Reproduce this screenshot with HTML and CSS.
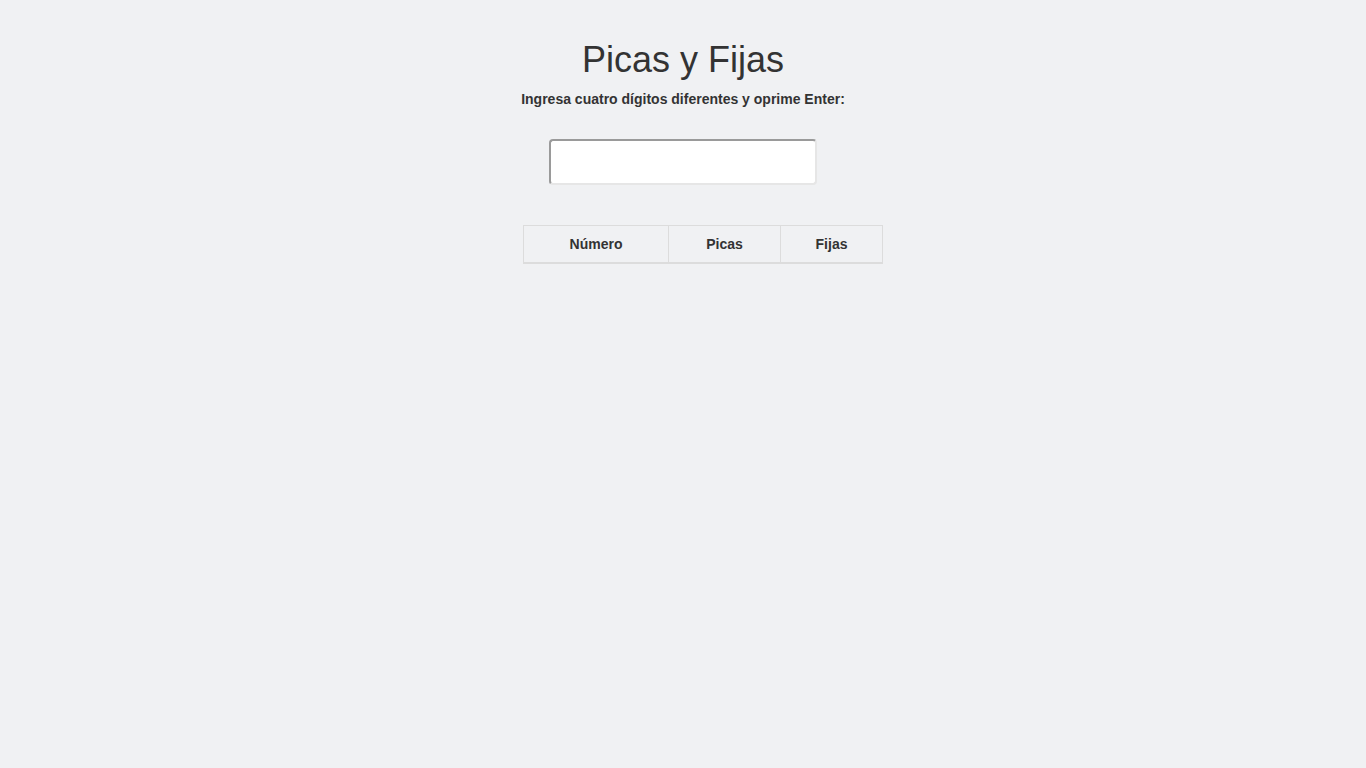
FILE: index.html
```html
<!DOCTYPE html>
<html lang="es">
<head>
<meta charset="utf-8">
<title>Picas y Fijas</title>
<link rel="stylesheet" href="styles.css">
</head>
<body>
<main class="game">
  <h1 class="title">Picas y Fijas</h1>
  <label class="prompt" for="guess">Ingresa cuatro dígitos diferentes y oprime Enter:</label>
  <input class="guess" id="guess" type="text">
  <table class="results">
    <thead>
      <tr>
        <th class="col-num">Número</th>
        <th class="col-picas">Picas</th>
        <th class="col-fijas">Fijas</th>
      </tr>
    </thead>
    <tbody></tbody>
  </table>
</main>
</body>
</html>
```
FILE: styles.css
```css
html, body {
  margin: 0;
  padding: 0;
}
body {
  background: #f0f1f3;
  color: #333;
  font-family: "Liberation Sans", Arial, sans-serif;
  font-size: 14px;
  line-height: 1.42857;
}
.game {
  display: flex;
  flex-direction: column;
  align-items: center;
  padding-top: 20px;
}
.title {
  font-size: 36px;
  font-weight: 400;
  line-height: 1.1;
  margin: 20px 0 9px;
}
.prompt {
  font-weight: 700;
  display: block;
  margin: 0;
  line-height: 20px;
}
.guess {
  box-sizing: border-box;
  width: 268px;
  height: 46px;
  margin-top: 30px;
  background: #fff;
  border-style: solid;
  border-width: 2px;
  border-color: #9a9a9a #e6e6e6 #e6e6e6 #9a9a9a;
  border-radius: 4px;
  font-family: inherit;
  font-size: 18px;
  padding: 0 12px;
  outline: none;
}
.results {
  margin-top: 40px;
  margin-left: 40px;
  width: 360px;
  border-collapse: collapse;
  border: 1px solid #dcdcdc;
}
.results th {
  font-weight: 700;
  text-align: center;
  padding: 8px;
  line-height: 20px;
  border: 1px solid #dcdcdc;
  border-bottom-width: 2px;
}
.col-num { width: 128px; }
.col-picas { width: 95px; }
.col-fijas { width: 85px; }
```
